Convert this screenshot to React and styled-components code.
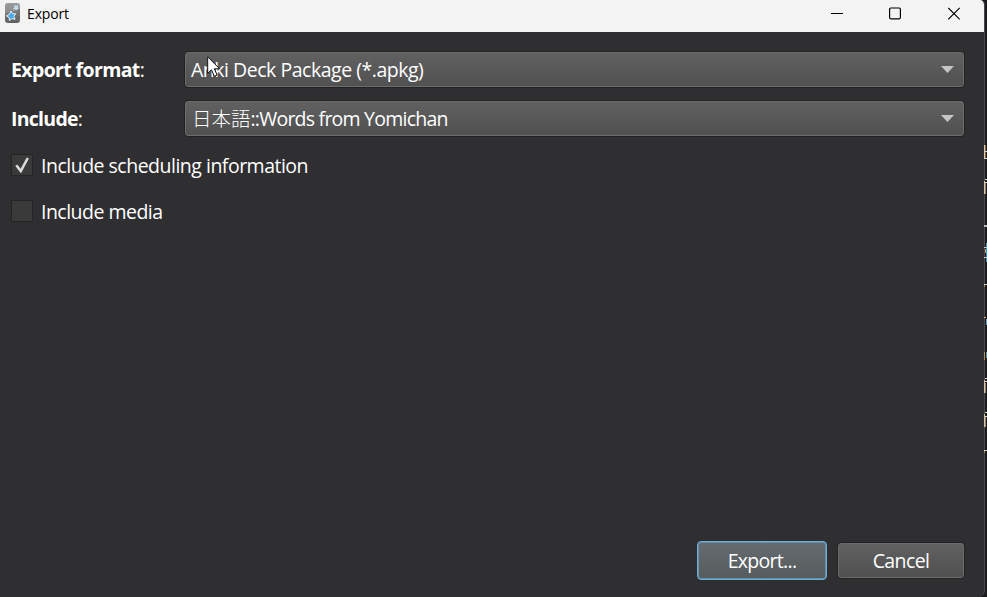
import React from "react";
import styled, { createGlobalStyle } from "styled-components";

const GlobalStyle = createGlobalStyle`
  * { box-sizing: border-box; }
  body { margin: 0; background: #1c1c1e; overflow: hidden; }
`;

const Desktop = styled.div`
  display: flex;
  width: 987px;
  height: 597px;
  overflow: hidden;
  background: #1b1b1d;
  font-family: "Open Sans", "Noto Sans", "Noto Sans CJK JP", sans-serif;
`;

const Window = styled.main`
  display: flex;
  flex-direction: column;
  width: 985px;
  height: 597px;
  flex: none;
  border-right: 1px solid #4a4a4c;
  border-radius: 0 5px 7px 0;
  background: #2f2f31;
  overflow: hidden;
`;

const TitleBar = styled.header`
  display: flex;
  align-items: center;
  height: 32px;
  flex: none;
  padding: 0 23px 6px 5px;
  background: #f3f3f3;
`;

const Title = styled.span`
  margin-left: 7px;
  padding-top: 1px;
  flex: 1;
  font-size: 14px;
  line-height: 20px;
  letter-spacing: -0.15px;
  color: #000;
`;

const WindowControls = styled.div`
  display: flex;
  gap: 46px;
`;

const Content = styled.section`
  display: flex;
  flex: 1;
  flex-direction: column;
  padding: 19px 19px 17px 11px;
`;

const FieldRow = styled.div`
  display: grid;
  grid-template-columns: 173px 781px;
  align-items: center;
  height: 37px;
  margin-bottom: 12px;
`;

const Label = styled.label`
  font-size: 19.5px;
  line-height: 26px;
  font-weight: 700;
  letter-spacing: ${(p) => p.$spacing}px;
  color: #fff;
  white-space: nowrap;
`;

const Colon = styled.span`
  font-weight: 400;
`;

const Select = styled.div`
  display: flex;
  align-items: center;
  justify-content: space-between;
  height: 37px;
  padding: 0 10px 0 6px;
  border: 1px solid #222223;
  border-radius: 4px;
  background: linear-gradient(#616161, #505050);
  box-shadow: inset 0 0 0 1px #6c6c6c;
`;

const Text = styled.span`
  font-size: 19.5px;
  line-height: 26px;
  letter-spacing: ${(p) => p.$spacing || 0}px;
  color: #fff;
  white-space: nowrap;
`;

const Kanji = styled.span`
  font-family: "Noto Sans CJK JP", sans-serif;
  font-weight: 300;
  font-size: 19.5px;
  line-height: 20px;
  letter-spacing: 0;
  margin-left: 1px;
`;

const CheckRow = styled.div`
  display: flex;
  align-items: center;
  gap: 8px;
  height: 22px;
  margin: ${(p) => p.$top}px 0 0;

  > ${Text} {
    padding-top: 2px;
  }
`;

const CheckBox = styled.span`
  display: grid;
  place-items: center;
  width: 22px;
  height: 22px;
  border: 1px solid #252526;
  background: #3a3a3a;
`;

const Actions = styled.footer`
  display: flex;
  align-items: center;
  justify-content: flex-end;
  gap: 10px;
  margin-top: auto;
`;

const Button = styled.button`
  width: ${(p) => (p.$primary ? 130 : 128)}px;
  height: ${(p) => (p.$primary ? 39 : 37)}px;
  padding: 0;
  border: ${(p) => (p.$primary ? "1px solid #69afd9" : "1px solid #222223")};
  border-radius: 4px;
  background: ${(p) => (p.$primary ? "linear-gradient(#666b6f, #565b5e)" : "linear-gradient(#616161, #505050)")};
  box-shadow: inset 0 0 0 1px ${(p) => (p.$primary ? "#6490aa" : "#6c6c6c")};
  font-family: inherit;
`;

const Backdrop = styled.svg`
  position: absolute;
  left: 984px;
  top: 0;
`;

const Cursor = styled.svg`
  position: absolute;
  left: 207px;
  top: 56px;
`;

const AppIcon = () => (
  <svg width="15" height="20" viewBox="0 0 15 20">
    <defs>
      <linearGradient id="tile" x1="0" y1="0" x2="0" y2="1">
        <stop offset="0" stopColor="#8b8b8b" />
        <stop offset="1" stopColor="#606060" />
      </linearGradient>
    </defs>
    <rect width="15" height="20" rx="3.2" fill="url(#tile)" />
    <path d="M0 10 Q9 10 15 5 V3 Q15 0 12 0 H3 Q0 0 0 3Z" fill="#b6b6b6" opacity=".35" />
    <path d="M6 8.2l1.6 2.6 3.1-.1-1.8 2.6 1.2 3-3.2-.7-2.5 2-.3-3.2-2.7-1.6 2.9-1.3z" fill="#45a9ec" stroke="#dff1fb" strokeWidth="1" />
    <path d="M9.7 2.6l1.4.8 1.4-.9-.2 1.7 1.2 1.1-1.6.4-.7 1.5-.9-1.4-1.7-.1 1.1-1.3z" fill="#b5ddf5" stroke="#e5f3fb" strokeWidth=".6" />
  </svg>
);

const Arrow = () => (
  <svg width="13" height="7" viewBox="0 0 13 7">
    <path d="M0 0H13L6.5 7Z" fill="#c5c5c5" />
  </svg>
);

const Check = () => (
  <svg width="16" height="16" viewBox="0 0 16 16">
    <path d="M2.3 8.3L6.8 14L13.8 1" fill="none" stroke="#dadada" strokeWidth="2.6" />
  </svg>
);

const MARKS = [
  [0, 145, 1, 14, "#dccdb8"], [1, 145, 1, 14, "#8f6030"], [1, 151, 2, 1, "#ddd"], [1, 158, 2, 1, "#ddd"],
  [0, 181, 1, 13, "#d8c5a4"], [1, 179, 2, 1, "#ddd"], [1, 182, 2, 1, "#ddd"], [1, 183, 1, 11, "#8f8375"],
  [0, 225, 3, 2, "#bbb"], [2, 243, 1, 19, "#23a5cf"], [0, 247, 3, 1, "#ccc"], [0, 257, 3, 1, "#ccc"], [1, 249, 1, 4, "#b19a72"],
  [0, 284, 3, 1, "#c8d5df"], [0, 285, 1, 2, "#a68050"], [0, 317, 2, 1, "#d8ad67"], [2, 319, 1, 6, "#5aaae5"],
  [0, 352, 1, 8, "#b28e5b"], [2, 352, 1, 6, "#4b95c9"],
  [0, 380, 1, 13, "#d8c5a4"], [1, 378, 2, 1, "#ddd"], [1, 381, 2, 1, "#ddd"], [1, 383, 1, 10, "#8f8375"],
  [0, 414, 1, 13, "#d8c5a4"], [1, 412, 2, 1, "#ddd"], [1, 416, 2, 1, "#ddd"], [1, 417, 1, 10, "#8f8375"],
  [0, 450, 3, 1, "#ccd5dc"], [0, 451, 1, 2, "#a68050"],
];

export default function App() {
  return (
    <>
      <GlobalStyle />
      <Desktop>
        <Window>
          <TitleBar>
            <AppIcon />
            <Title>Export</Title>
            <WindowControls>
              <svg width="13" height="13"><path d="M1 6.5h12" stroke="#000" /></svg>
              <svg width="13" height="13"><rect x=".6" y="1" width="10.8" height="10.8" rx="1.2" fill="none" stroke="#000" strokeWidth="1.2" /></svg>
              <svg width="13" height="13"><path d="M.3 .9l11.4 11.4M11.7 .9L.3 12.3" stroke="#000" strokeWidth="1.1" /></svg>
            </WindowControls>
          </TitleBar>
          <Content>
            <FieldRow>
              <Label $spacing={-0.63}>Export format<Colon>:</Colon></Label>
              <Select><Text $spacing={-0.48}>Anki Deck Package (*.apkg)</Text><Arrow /></Select>
            </FieldRow>
            <FieldRow>
              <Label $spacing={-0.73}>Include<Colon>:</Colon></Label>
              <Select><Text $spacing={-0.77}><Kanji>日本語</Kanji>::Words from Yomichan</Text><Arrow /></Select>
            </FieldRow>
            <CheckRow $top={5}>
              <CheckBox><Check /></CheckBox>
              <Text $spacing={-0.5}>Include scheduling information</Text>
            </CheckRow>
            <CheckRow $top={24}>
              <CheckBox />
              <Text $spacing={-0.52}>Include media</Text>
            </CheckRow>
            <Actions>
              <Button $primary><Text $spacing={-0.7}>Export...</Text></Button>
              <Button><Text $spacing={-0.6}>Cancel</Text></Button>
            </Actions>
          </Content>
        </Window>
      </Desktop>
      <Backdrop width="3" height="597">
        {MARKS.map(([x, y, w, h, c], i) => <rect key={i} x={x} y={y} width={w} height={h} fill={c} />)}
      </Backdrop>
      <Cursor width="16" height="23" viewBox="0 0 16 23">
        <path d="M.7 .8V17.3L4.5 13.8L7.3 20.3L10.1 19.1L7.4 12.8H12.6Z" fill="#fff" stroke="#111" strokeWidth="1" />
      </Cursor>
    </>
  );
}
